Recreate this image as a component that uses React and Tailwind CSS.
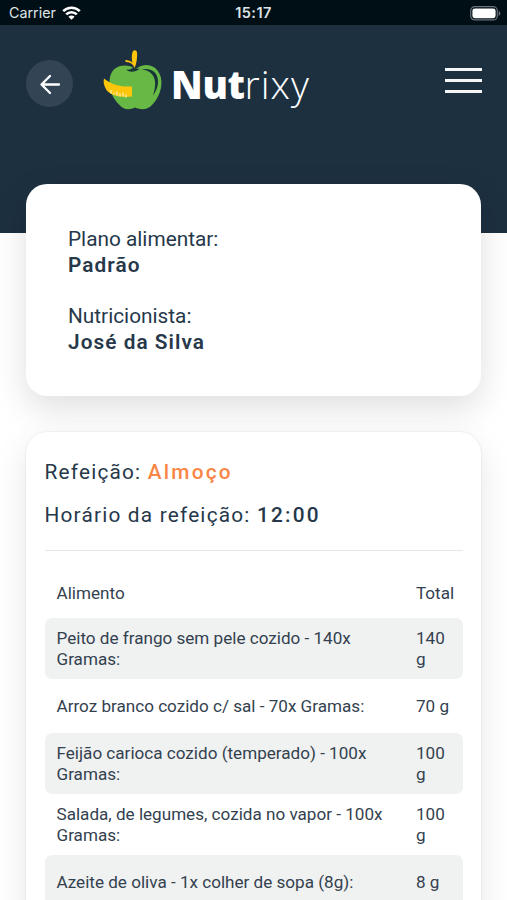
import React from "react";

const foods = [
  { name: "Peito de frango sem pele cozido - 140x Gramas:", total: "140 g", height: "h-[61px]" },
  { name: "Arroz branco cozido c/ sal - 70x Gramas:", total: "70 g", height: "h-[54px]" },
  { name: "Feijão carioca cozido (temperado) - 100x Gramas:", total: "100 g", height: "h-[61px]" },
  { name: "Salada, de legumes, cozida no vapor - 100x Gramas:", total: "100 g", height: "h-[61px]" },
  { name: "Azeite de oliva - 1x colher de sopa (8g):", total: "8 g", height: "h-[54px]" },
];

function StatusBar() {
  return (
    <div className="grid h-[25px] grid-cols-3 items-center bg-[#000e16] pl-[9px] pr-[6px] pt-[2px] text-[14.5px] leading-none text-[#dfe4e7]">
      <div className="flex items-center gap-[6px]">
        <span className="font-['Inter',sans-serif] text-[14.3px]">Carrier</span>
        <svg width="19" height="14" viewBox="0 0 19 14" fill="none" stroke="#fff" strokeWidth="2.6">
          <path d="M1.2 5.2a11.8 11.8 0 0 1 16.6 0" />
          <path d="M4.2 8.4a7.5 7.5 0 0 1 10.6 0" />
          <path d="M9.5 13.8 6.4 10.7a4.4 4.4 0 0 1 6.2 0Z" fill="#fff" stroke="none" />
        </svg>
      </div>
      <span className="-ml-[3px] text-center font-['Inter',sans-serif] font-semibold tracking-[0.4px]">15:17</span>
      <svg className="justify-self-end" width="31" height="15" viewBox="0 0 31 15">
        <rect x="0.7" y="0.7" width="26.6" height="13.2" rx="4" fill="none" stroke="#6b7378" strokeWidth="1.2" />
        <rect x="2.4" y="2.4" width="23.2" height="9.8" rx="2.4" fill="#fff" />
        <path d="M28.7 5v4.8c2.2-.8 2.2-4 0-4.8Z" fill="#6b7378" />
      </svg>
    </div>
  );
}

function AppleIcon() {
  return (
    <svg width="60" height="62" viewBox="0 0 60 62">
      <path
        d="M33 19C41 12 53 14 57 25c4 10-1 24-9 31-5 4-10 4-16 1.500-6 3-12 2-16-3C8 47 4 34 8 24c4-9 15-11 25-5Z"
        fill="#68b846"
      />
      <path d="M23 19.500c4 3.500 9 2.500 14-.7-3 .2-5-.3-7-1.300-2 2-4 2.400-7 2Z" fill="#173539" />
      <path d="M38 19.500c17-4 22 13 12 26 5-14 2-25-12-26Z" fill="#173539" />
      <path
        d="M31.500 18C30 14 28 12.500 23 12c-2-1.500.2-3 2-1.500 2 0 3.500 1 4.500 2.500-1-4-1-8 .2-11.500 1.500-2 4-1.500 4.300 1 .5 5-.5 11-2.500 15.500Z"
        fill="#fdc60b"
      />
      <path d="M1 28.500C9 35 18 37 29 36.500v10C19 48 8 46 3.500 40 1 36 0 32 1 28.500Z" fill="#fdc60b" />
      <path d="M8 40v3.500m3-1v2m3-3v4m3-2v3m3-4v4m3-2v3" stroke="#ffe999" strokeWidth="1.500" />
    </svg>
  );
}

function Header() {
  return (
    <header className="h-[208px] bg-[#1d3040]">
      <div className="flex items-start pl-[26px] pr-[25px] pt-[25px]">
        <button aria-label="Voltar" className="mt-[10px] flex size-[47px] items-center justify-center rounded-full bg-[#334555]">
          <svg width="22" height="22" viewBox="0 0 22 22" fill="none" stroke="#fff" strokeWidth="2.300" strokeLinecap="round" strokeLinejoin="round">
            <path d="M20 11.500H2.500M11 3l-8.500 8.500L11 20" />
          </svg>
        </button>
        <div className="ml-[30px] flex">
          <AppleIcon />
          <div className="ml-[8px] mt-[7px] flex font-['Open_Sans',sans-serif] text-[38px] leading-[54px] text-white">
            <span className="w-[73.500px] font-extrabold tracking-[-0.3px]">Nut</span>
            <span className="text-[39px] font-light tracking-[1px]">rixy</span>
          </div>
        </div>
        <button aria-label="Menu" className="ml-auto mt-[18px] flex w-[37px] flex-col gap-[8px]">
          <span className="h-[3px] bg-[#f4f6f8]" />
          <span className="h-[3px] bg-[#f4f6f8]" />
          <span className="h-[3px] bg-[#f4f6f8]" />
        </button>
      </div>
    </header>
  );
}

function PlanCard() {
  return (
    <section className="relative h-[212px] rounded-[21px] bg-white px-[42px] pt-[43px] text-[20.800px] leading-[25.700px] shadow-[0_12px_34px_rgba(0,0,0,0.13)]">
      <p>Plano alimentar:</p>
      <p className="font-semibold tracking-[1.050px]">Padrão</p>
      <p className="mt-[25.700px]">Nutricionista:</p>
      <p className="font-semibold tracking-[1.050px]">José da Silva</p>
    </section>
  );
}

function MealCard() {
  return (
    <section className="relative mt-[36px] rounded-[21px] bg-white pl-[18.500px] pr-[18px] pb-8 pt-[19px] shadow-[0_0_2px_rgba(0,0,0,0.12),0_12px_34px_rgba(0,0,0,0.10)]">
      <div className="border-b border-[#e6e8ea] pb-[13px] text-[20.800px] leading-[43px] tracking-[1.200px]">
        <p>
          Refeição: <span className="font-medium tracking-[2.250px] text-[#f98647]">Almoço</span>
        </p>
        <p>
          Horário da refeição: <span className="font-medium tracking-[2.250px]">12:00</span>
        </p>
      </div>
      <div className="mt-[18px] text-[17.100px] leading-[20.800px] text-[#33414f]">
        <div className="flex h-[49px] items-center pl-[12px]">
          <span className="w-[359.500px]">Alimento</span>
          <span>Total</span>
        </div>
        {foods.map((food) => (
          <div key={food.name} className={`flex items-center rounded-[7px] pl-[12px] odd:bg-white even:bg-[#f0f1f1] ${food.height}`}>
            <span className="w-[359.500px] shrink-0 pr-4">{food.name}</span>
            <span className="w-[34px]">{food.total}</span>
          </div>
        ))}
      </div>
    </section>
  );
}

export default function App() {
  return (
    <div className="h-[900px] w-[507px] overflow-hidden bg-white font-['Roboto',sans-serif] text-[#26384a]">
      <StatusBar />
      <Header />
      <main className="-mt-[49px] px-[26px]">
        <PlanCard />
        <MealCard />
      </main>
    </div>
  );
}
